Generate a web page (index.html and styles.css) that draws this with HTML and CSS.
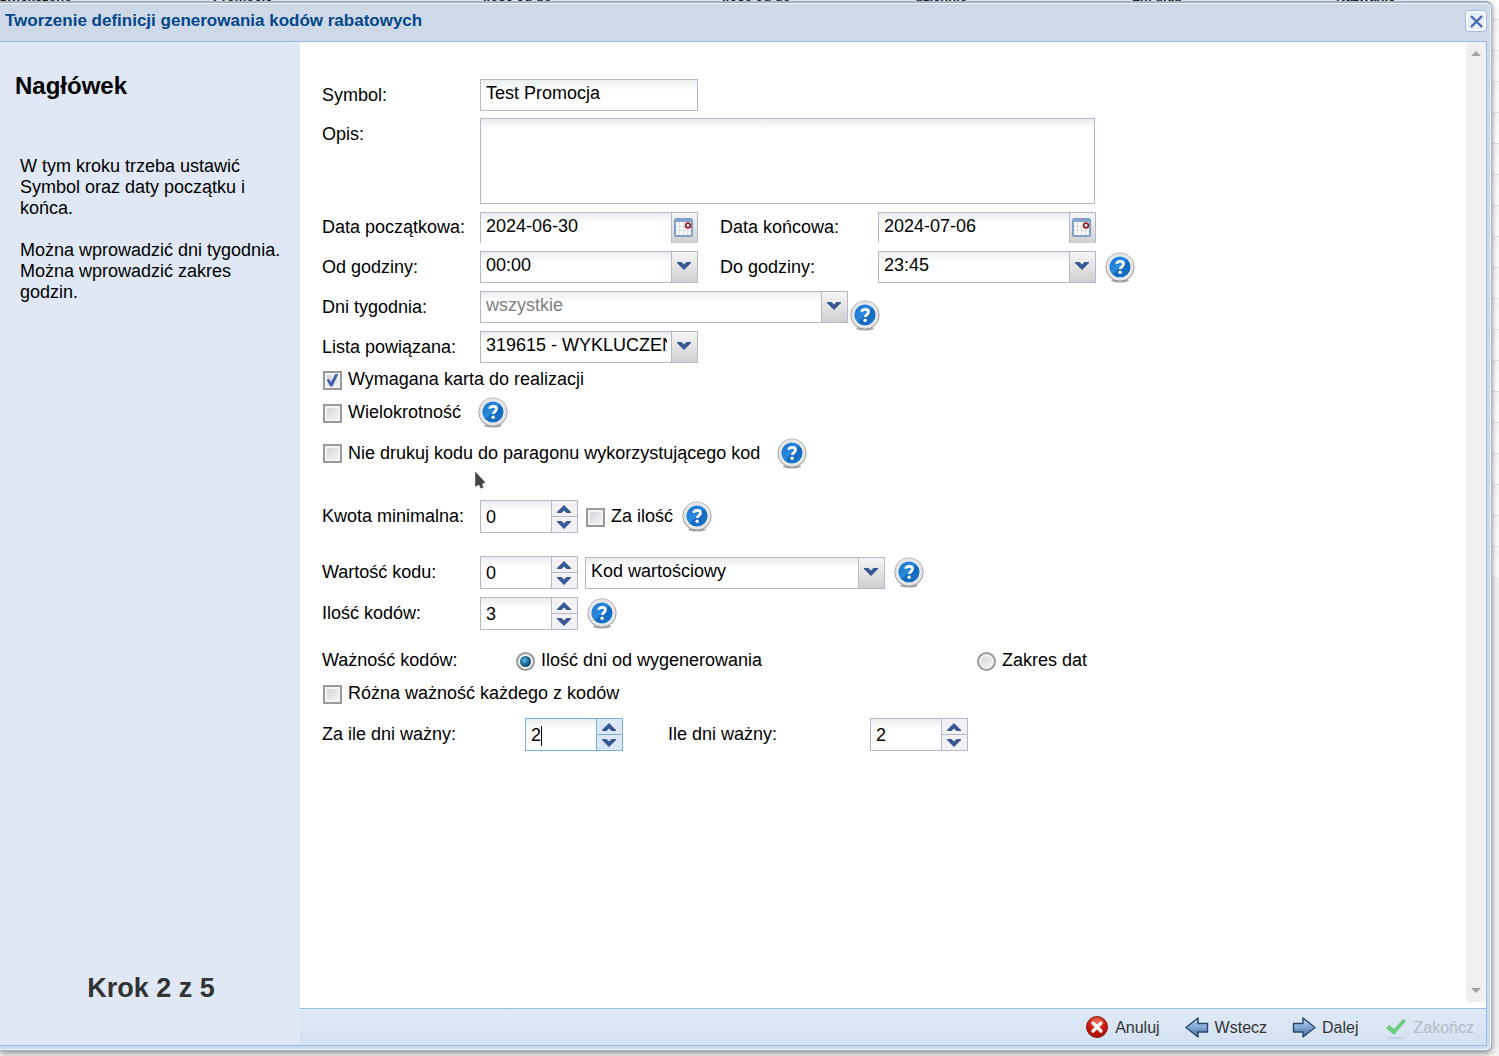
FILE: index.html
```html
<!DOCTYPE html>
<html lang="pl">
<head>
<meta charset="utf-8">
<title>Tworzenie definicji generowania kodów rabatowych</title>
<link rel="stylesheet" href="styles.css">
</head>
<body>
<svg class="defs" aria-hidden="true">
  <defs>
    <linearGradient id="blue" x1="0" y1="0" x2="1" y2="1"><stop offset="0" stop-color="#1a6fc4"/><stop offset=".45" stop-color="#2a8be0"/><stop offset=".55" stop-color="#1467bd"/><stop offset="1" stop-color="#1b78d0"/></linearGradient>
    <linearGradient id="ring" x1="0" y1="0" x2="0" y2="1"><stop offset="0" stop-color="#bcbcbc"/><stop offset="1" stop-color="#8c8c8c"/></linearGradient>
    <radialGradient id="red" cx="50%" cy="25%" r="80%"><stop offset="0" stop-color="#e86a55"/><stop offset=".5" stop-color="#cf1f12"/><stop offset="1" stop-color="#9a0a08"/></radialGradient>
    <linearGradient id="arrow" x1="0" y1="0" x2="0" y2="1"><stop offset="0" stop-color="#c3d9f0"/><stop offset=".5" stop-color="#7fa6d4"/><stop offset="1" stop-color="#41699f"/></linearGradient>
    <symbol id="help" viewBox="0 0 30 31">
      <ellipse cx="15" cy="28.500" rx="9" ry="2" fill="#777" opacity=".6"/>
      <circle cx="15" cy="15" r="14.200" fill="#e9e9e9" stroke="url(#ring)"/>
      <circle cx="15" cy="15" r="12.200" fill="#f6f6f6" stroke="#ddd"/>
      <circle cx="15" cy="15" r="10.600" fill="url(#blue)"/>
      <path d="M11.600 11.800C12 10 13.300 9.300 15.100 9.300c2 0 3.400 1 3.400 2.700 0 2.400-3 2.600-3.300 5" fill="none" stroke="#fff" stroke-width="2.800"/>
      <circle cx="15.100" cy="20.300" r="1.700" fill="#fff"/>
    </symbol>
    <symbol id="down" viewBox="0 0 14 8"><path d="M0 0h4.500L7 2.500 9.500 0H14v1L7 8 0 1z" fill="#3a5795"/></symbol>
    <symbol id="up" viewBox="0 0 14 8"><path d="M0 8h4.500L7 5.500 9.500 8H14V7L7 0 0 7z" fill="#3a5795"/></symbol>
    <symbol id="calendar" viewBox="0 0 19 19">
      <rect x="1" y="1" width="17" height="17" rx="1.500" fill="#fafafa" stroke="#7f9fc8" stroke-width="2"/>
      <path d="M1 2.500h17" stroke="#86a5cc" stroke-width="3"/>
      <path d="M2 8.500h9M2 12.500h15M5.500 4v13M9.500 4v13M13.500 11v6" stroke="#dcdcdc"/>
      <circle cx="14" cy="7.500" r="2.300" fill="#fff" stroke="#a01c22" stroke-width="1.800"/>
    </symbol>
  </defs>
</svg>

<div class="grid-head" aria-hidden="true">
  <span>zwiększono</span><span>Promocje</span><span>Ilość od do</span><span>Ilość od do</span><span>dziennie</span><span>Lm ulub</span><span>Nazwanie</span>
</div>

<main class="window">
  <header class="title-bar">
    <h1>Tworzenie definicji generowania kodów rabatowych</h1>
    <button class="close" type="button" aria-label="Zamknij">
      <svg width="13" height="13" viewBox="0 0 13 13"><path d="M1 1l11 11M12 1L1 12" stroke="#4766b4" stroke-width="2.400"/></svg>
    </button>
  </header>

  <div class="body">
    <aside class="sidebar">
      <h2>Nagłówek</h2>
      <p>W tym kroku trzeba ustawić Symbol oraz daty początku i końca.</p>
      <p>Można wprowadzić dni tygodnia. Można wprowadzić zakres godzin.</p>
      <strong class="step">Krok 2 z 5</strong>
    </aside>

    <section class="content">
      <div class="scroller">
        <form class="form">
          <div class="row">
            <label class="name" for="symbol">Symbol:</label>
            <div class="field"><input id="symbol" type="text" value="Test Promocja"></div>
          </div>
          <div class="row top">
            <label class="name" for="opis">Opis:</label>
            <textarea id="opis" class="area"></textarea>
          </div>
          <div class="row">
            <label class="name" for="d1">Data początkowa:</label>
            <div class="field date"><input id="d1" type="text" value="2024-06-30"><button class="trigger" type="button" aria-label="Kalendarz"><svg width="19" height="19"><use href="#calendar"/></svg></button></div>
            <label class="name second" for="d2">Data końcowa:</label>
            <div class="field date"><input id="d2" type="text" value="2024-07-06"><button class="trigger" type="button" aria-label="Kalendarz"><svg width="19" height="19"><use href="#calendar"/></svg></button></div>
          </div>
          <div class="row">
            <label class="name" for="h1">Od godziny:</label>
            <div class="field"><select id="h1"><option>00:00</option></select><span class="trigger"><svg width="14" height="8"><use href="#down"/></svg></span></div>
            <label class="name second" for="h2">Do godziny:</label>
            <div class="field"><select id="h2"><option>23:45</option></select><span class="trigger"><svg width="14" height="8"><use href="#down"/></svg></span></div>
            <button class="help" type="button" aria-label="Pomoc"><svg width="30" height="31"><use href="#help"/></svg></button>
          </div>
          <div class="row">
            <label class="name" for="dni">Dni tygodnia:</label>
            <div class="field days"><select id="dni" class="empty"><option>wszystkie</option></select><span class="trigger"><svg width="14" height="8"><use href="#down"/></svg></span></div>
            <button class="help low" type="button" aria-label="Pomoc"><svg width="30" height="31"><use href="#help"/></svg></button>
          </div>
          <div class="row">
            <label class="name" for="lista">Lista powiązana:</label>
            <div class="field"><select id="lista"><option>319615 - WYKLUCZENIA</option></select><span class="trigger"><svg width="14" height="8"><use href="#down"/></svg></span></div>
          </div>
          <div class="row check">
            <label class="tick"><input type="checkbox" checked>Wymagana karta do realizacji</label>
          </div>
          <div class="row check">
            <label class="tick"><input type="checkbox">Wielokrotność</label>
            <button class="help far" type="button" aria-label="Pomoc"><svg width="30" height="31"><use href="#help"/></svg></button>
          </div>
          <div class="row check tall">
            <label class="tick"><input type="checkbox">Nie drukuj kodu do paragonu wykorzystującego kod</label>
            <button class="help far" type="button" aria-label="Pomoc"><svg width="30" height="31"><use href="#help"/></svg></button>
          </div>
          <div class="row section">
            <label class="name" for="kwota">Kwota minimalna:</label>
            <div class="spinner"><input id="kwota" type="text" inputmode="numeric" value="0"><span class="steps"><button type="button" aria-label="Więcej"><svg width="14" height="8"><use href="#up"/></svg></button><button type="button" aria-label="Mniej"><svg width="14" height="8"><use href="#down"/></svg></button></span></div>
            <label class="tick near"><input type="checkbox">Za ilość</label>
            <button class="help" type="button" aria-label="Pomoc"><svg width="30" height="31"><use href="#help"/></svg></button>
          </div>
          <div class="row section">
            <label class="name" for="wartosc">Wartość kodu:</label>
            <div class="spinner"><input id="wartosc" type="text" inputmode="numeric" value="0"><span class="steps"><button type="button" aria-label="Więcej"><svg width="14" height="8"><use href="#up"/></svg></button><button type="button" aria-label="Mniej"><svg width="14" height="8"><use href="#down"/></svg></button></span></div>
            <div class="field kind near"><select aria-label="Rodzaj kodu"><option>Kod wartościowy</option></select><span class="trigger"><svg width="14" height="8"><use href="#down"/></svg></span></div>
            <button class="help" type="button" aria-label="Pomoc"><svg width="30" height="31"><use href="#help"/></svg></button>
          </div>
          <div class="row">
            <label class="name" for="ilosc">Ilość kodów:</label>
            <div class="spinner"><input id="ilosc" type="text" inputmode="numeric" value="3"><span class="steps"><button type="button" aria-label="Więcej"><svg width="14" height="8"><use href="#up"/></svg></button><button type="button" aria-label="Mniej"><svg width="14" height="8"><use href="#down"/></svg></button></span></div>
            <button class="help" type="button" aria-label="Pomoc"><svg width="30" height="31"><use href="#help"/></svg></button>
          </div>
          <div class="row radios">
            <span class="name wide">Ważność kodów:</span>
            <label class="tick option"><input type="radio" name="waznosc" checked>Ilość dni od wygenerowania</label>
            <label class="tick"><input type="radio" name="waznosc">Zakres dat</label>
          </div>
          <div class="row check">
            <label class="tick"><input type="checkbox">Różna ważność każdego z kodów</label>
          </div>
          <div class="row">
            <label class="name days-label" for="za">Za ile dni ważny:</label>
            <div class="spinner active"><input id="za" type="text" inputmode="numeric" value="2"><span class="steps"><button type="button" aria-label="Więcej"><svg width="14" height="8"><use href="#up"/></svg></button><button type="button" aria-label="Mniej"><svg width="14" height="8"><use href="#down"/></svg></button></span></div>
            <label class="name days-label after" for="ile">Ile dni ważny:</label>
            <div class="spinner"><input id="ile" type="text" inputmode="numeric" value="2"><span class="steps"><button type="button" aria-label="Więcej"><svg width="14" height="8"><use href="#up"/></svg></button><button type="button" aria-label="Mniej"><svg width="14" height="8"><use href="#down"/></svg></button></span></div>
          </div>
        </form>
        <div class="scrollbar" aria-hidden="true"><i class="tri up"></i><i class="tri"></i></div>
      </div>

      <footer class="toolbar">
        <button type="button">
          <svg width="24" height="24" viewBox="0 0 24 24"><circle cx="12" cy="12" r="10.500" fill="url(#red)" stroke="#8f1a14"/><path d="M8 8l8 8M16 8l-8 8" stroke="#fff" stroke-width="3.200" stroke-linecap="round"/></svg>
          Anuluj</button>
        <button type="button">
          <svg width="24" height="24" viewBox="0 0 24 24"><path d="M1 12.500L13 3v5.500h9.500v8.500H13v5z" fill="url(#arrow)" stroke="#27466e" stroke-width="1.400" stroke-linejoin="round"/></svg>
          Wstecz</button>
        <button type="button">
          <svg width="24" height="24" viewBox="0 0 24 24"><path d="M23 12.500L11 3v5.500H1.500v8.500H11v5z" fill="url(#arrow)" stroke="#27466e" stroke-width="1.400" stroke-linejoin="round"/></svg>
          Dalej</button>
        <button type="button" disabled>
          <svg width="24" height="24" viewBox="0 0 24 24"><ellipse cx="12" cy="23" rx="9" ry="1" fill="#c3cfde"/><path d="M2 13l3-3 5 4L19 4l3 2L10 20z" fill="#6fcb7c"/></svg>
          Zakończ</button>
      </footer>
    </section>
  </div>
</main>

<svg class="pointer" width="12" height="21" viewBox="0 0 12 21" aria-hidden="true"><path d="M1 1v16l4-2 1.500 3.500 3-.5-1-4 3-1.500z" fill="#444" stroke="#fff" stroke-width=".4"/></svg>
</body>
</html>
```

FILE: styles.css
```css
* { box-sizing: border-box; }

body {
  margin: 0;
  min-height: 100vh;
  display: flex;
  flex-direction: column;
  overflow: hidden;
  font: 18px/21px "Liberation Sans", Arial, sans-serif;
  color: #000;
  background: repeating-linear-gradient(#fff 0 19px, #e6e6e6 19px 20px, #fafafa 20px 31px) top / 100% 577px no-repeat #f3f3f3;
}

button, input, select, textarea { font: inherit; color: inherit; }
button { padding: 0; border: 0; background: none; }
.defs { position: absolute; width: 0; height: 0; }
svg { display: block; flex: none; }

.grid-head {
  display: grid;
  grid-template-columns: 213px 270px 239px 193px 217px 204px 1fr;
  grid-template-rows: 1px;
  align-items: end;
  height: 1px;
  overflow: hidden;
  font-size: 13px;
  font-weight: bold;
  line-height: 15px;
  background: #fff;
}
.grid-head span { margin-bottom: -3px; }

.window {
  flex: 1;
  display: flex;
  flex-direction: column;
  margin: 0 7px 5px 0;
  padding: 0 4px 4px 0;
  border: 1px solid #a2b1c5;
  border-top-width: 2px;
  border-left: 0;
  border-radius: 0 6px 6px 0;
  background: #ced9e7;
  box-shadow: inset -1px -1px #f0f6fd, inset 0 1px #f0f6fd, 0 2px 6px #888;
}

.title-bar {
  display: flex;
  align-items: center;
  justify-content: space-between;
  height: 38px;
  padding-left: 5px;
}
.title-bar h1 {
  margin: 0;
  padding-bottom: 3px;
  font-size: 17px;
  line-height: 20px;
  color: #04468c;
}
.close {
  display: grid;
  place-items: center;
  width: 22px;
  height: 22px;
  margin-bottom: 2px;
  border: 1px solid #99bce8;
  border-radius: 4px;
  background: #e4effc;
  box-shadow: inset 0 0 0 2px #fff;
}

.body {
  flex: 1;
  display: flex;
  border: 1px solid #99bce8;
  border-left: 0;
}

.sidebar {
  flex: none;
  display: flex;
  flex-direction: column;
  width: 300px;
  padding: 30px 18px 42px 20px;
  background: #dfe8f4;
}
.sidebar h2 {
  margin: 0 0 56px -5px;
  font-size: 24px;
  line-height: 28px;
}
.sidebar p { margin: 0 0 21px; }
.step {
  margin-top: auto;
  font-size: 27px;
  line-height: 30px;
  text-align: center;
  color: #333;
}

.content {
  flex: 1;
  display: flex;
  flex-direction: column;
  min-width: 0;
  background: #fff;
}
.scroller {
  flex: 1;
  display: flex;
  margin-bottom: 6px;
}
.scrollbar {
  display: flex;
  flex-direction: column;
  justify-content: space-between;
  align-items: center;
  width: 20px;
  padding: 9px 0;
  background: #f0f0f0;
}
.tri {
  border: 5px solid transparent;
  border-top-color: #a3a3a3;
  border-bottom: 0;
}
.tri.up {
  border-top: 0;
  border-bottom: 5px solid #a3a3a3;
}

.form {
  flex: 1;
  padding: 29px 0 0 22px;
}
.row {
  display: flex;
  align-items: center;
  margin-top: 8px;
}
.row.top {
  align-items: flex-start;
  margin-top: 7px;
}
.row.top .name { padding-top: 6px; }
.name {
  flex: none;
  width: 158px;
}
.second {
  width: 180px;
  padding-left: 22px;
}

.field, .spinner {
  flex: none;
  display: flex;
  width: 218px;
  height: 32px;
  border: 1px solid #b5b8c8;
  background: linear-gradient(#e9eded, #fff 10px);
}
.field input, .field select, .spinner input {
  flex: 1;
  min-width: 0;
  margin: 0;
  padding: 0 4px 3px 5px;
  border: 0;
  outline: 0;
  border-radius: 0;
  appearance: none;
  background: none;
}
.field .empty { color: #808080; }
.date {
  height: 31px;
  border-bottom: 0;
}
.days { width: 368px; }
.kind { width: 300px; }
.near { margin-left: 7px; }
.trigger {
  flex: none;
  display: grid;
  place-items: center;
  width: 26px;
  padding: 0 2px 2px 0;
  border-left: 1px solid #b5b8c8;
  background: linear-gradient(#f6f6f6, #cfcfcf);
}
.area {
  width: 615px;
  height: 86px;
  border: 1px solid #b5b8c8;
  outline: 0;
  resize: none;
  background: linear-gradient(#e9eded, #fff 10px);
}

.spinner {
  width: 98px;
  height: 33px;
}
.spinner input { padding: 2px 4px 0 5px; }
.steps {
  display: flex;
  flex-direction: column;
  width: 26px;
  border-left: 1px solid #b5b8c8;
}
.steps button {
  flex: 1;
  display: grid;
  place-items: center;
  padding-right: 2px;
  background: #f2f2f4;
}
.steps button + button { border-top: 1px solid #b5b8c8; }
.active, .active .steps, .active .steps button { border-color: #7eadd9; }
.active .steps button { background: #dbe7f7; }
.active input { background: linear-gradient(#000, #000) 15px 7px / 1px 20px no-repeat; }

.help { margin-left: 9px; }
.help.low {
  align-self: flex-start;
  margin: 9px 0 -8px 2px;
}
.help.far { margin-left: 17px; }

.check {
  height: 33px;
  margin-top: 0;
}
.check.tall { height: 48px; }
.section { margin-top: 23px; }
.radios {
  height: 33px;
  margin-top: 14px;
}
.wide { width: 193px; }
.option { width: 461px; }
.days-label { width: 203px; }
.after {
  width: 247px;
  padding-left: 45px;
}

.tick {
  display: flex;
  align-items: center;
  gap: 6px;
}
.tick input {
  display: grid;
  place-items: center;
  flex: none;
  width: 19px;
  height: 19px;
  margin: 1px 0 0 1px;
  appearance: none;
  border: 2px solid #999;
  background: linear-gradient(135deg, #cfd2d6, #f6f6f6);
  box-shadow: inset 0 0 0 2px #f4f4f4;
}
.tick input[type="checkbox"]:checked::before {
  content: "";
  width: 12px;
  height: 13px;
  background: #4563ad;
  clip-path: polygon(0 48%, 22% 42%, 38% 66%, 76% 0, 100% 0, 50% 100%, 32% 100%);
}
.tick input[type="radio"] { border-radius: 50%; }
.tick input[type="radio"]:checked::before {
  content: "";
  width: 11px;
  height: 11px;
  border-radius: 50%;
  background: radial-gradient(circle at 40% 40%, #5fc0ea, #15608f 50%, #18324a);
}

.toolbar {
  display: flex;
  align-items: center;
  justify-content: flex-end;
  gap: 25px;
  height: 37px;
  padding-right: 12px;
  border-top: 1px solid #99bce8;
  background: linear-gradient(#dfe9f5, #d3e1f1);
}
.toolbar button {
  display: flex;
  align-items: center;
  gap: 6px;
  font-size: 16px;
  color: #333;
}
.toolbar button:disabled { color: #b3bcc7; }

.pointer {
  position: absolute;
  left: 474px;
  top: 470px;
}
```
